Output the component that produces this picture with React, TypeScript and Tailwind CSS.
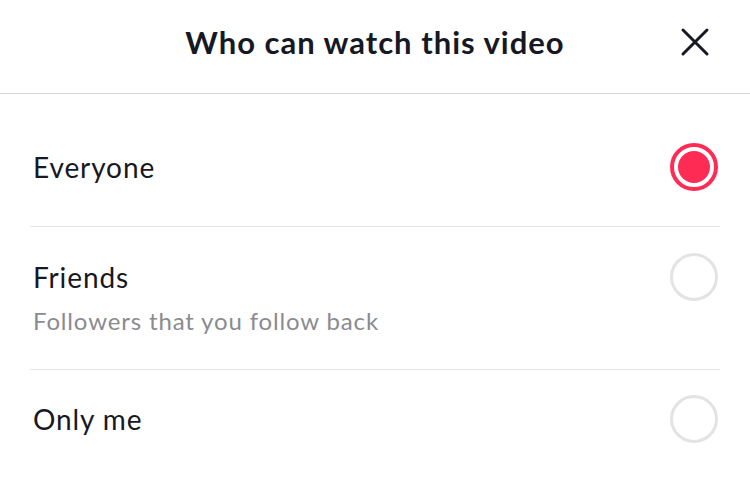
import { useState } from "react";

type Option = {
  id: string;
  label: string;
  hint?: string;
};

const options: Option[] = [
  { id: "everyone", label: "Everyone" },
  { id: "friends", label: "Friends", hint: "Followers that you follow back" },
  { id: "me", label: "Only me" },
];

function Radio({ checked }: { checked: boolean }) {
  return checked ? (
    <span className="flex h-[48px] w-[48px] shrink-0 items-center justify-center rounded-full border-[4px] border-[#fe2c55]">
      <span className="h-[32px] w-[32px] rounded-full bg-[#fe2c55]" />
    </span>
  ) : (
    <span className="h-[48px] w-[48px] shrink-0 rounded-full border-[3px] border-[#e3e3e4]" />
  );
}

export default function App() {
  const [value, setValue] = useState("everyone");

  return (
    <div
      className="h-[477px] w-[750px] overflow-hidden bg-white text-[#161823]"
      style={{ fontFamily: "Lato, 'Open Sans', sans-serif" }}
    >
      {/* Header */}
      <div className="relative flex h-[94px] items-center justify-center border-b border-[#d8d8d8] pb-[8px]">
        <h1 className="text-[31px] font-bold tracking-[1px]">Who can watch this video</h1>
        <button className="absolute right-[38px] top-[25px] flex h-[34px] w-[34px] items-center justify-center">
          <svg width="30" height="30" viewBox="0 0 30 30" fill="none" stroke="#161823" strokeWidth="3" strokeLinecap="round">
            <path d="M3 3 L27 27 M27 3 L3 27" />
          </svg>
        </button>
      </div>

      {/* Options */}
      <div className="px-[30px]">
        {options.map((opt, i) => (
          <button
            key={opt.id}
            onClick={() => setValue(opt.id)}
            className={
              "flex w-full flex-col text-left" +
              (i < options.length - 1 ? " border-b border-[#e6e6e6]" : "") +
              (i === 0 ? " h-[133px] justify-center pt-[14px]" : "") +
              (i === 1 ? " h-[143px] pt-[32px]" : "") +
              (i === 2 ? " h-[100px] justify-center pb-[2px]" : "")
            }
          >
            <div className="flex h-[36px] items-center justify-between pl-[3px] pr-[2px]">
              <span className="text-[28px] leading-[36px] tracking-[0.9px]">{opt.label}</span>
              <Radio checked={value === opt.id} />
            </div>
            {opt.hint && (
              <span className="mt-[10px] pl-[3px] text-[24px] leading-[32px] tracking-[0.85px] text-[#8a8b91]">
                {opt.hint}
              </span>
            )}
          </button>
        ))}
      </div>
    </div>
  );
}
